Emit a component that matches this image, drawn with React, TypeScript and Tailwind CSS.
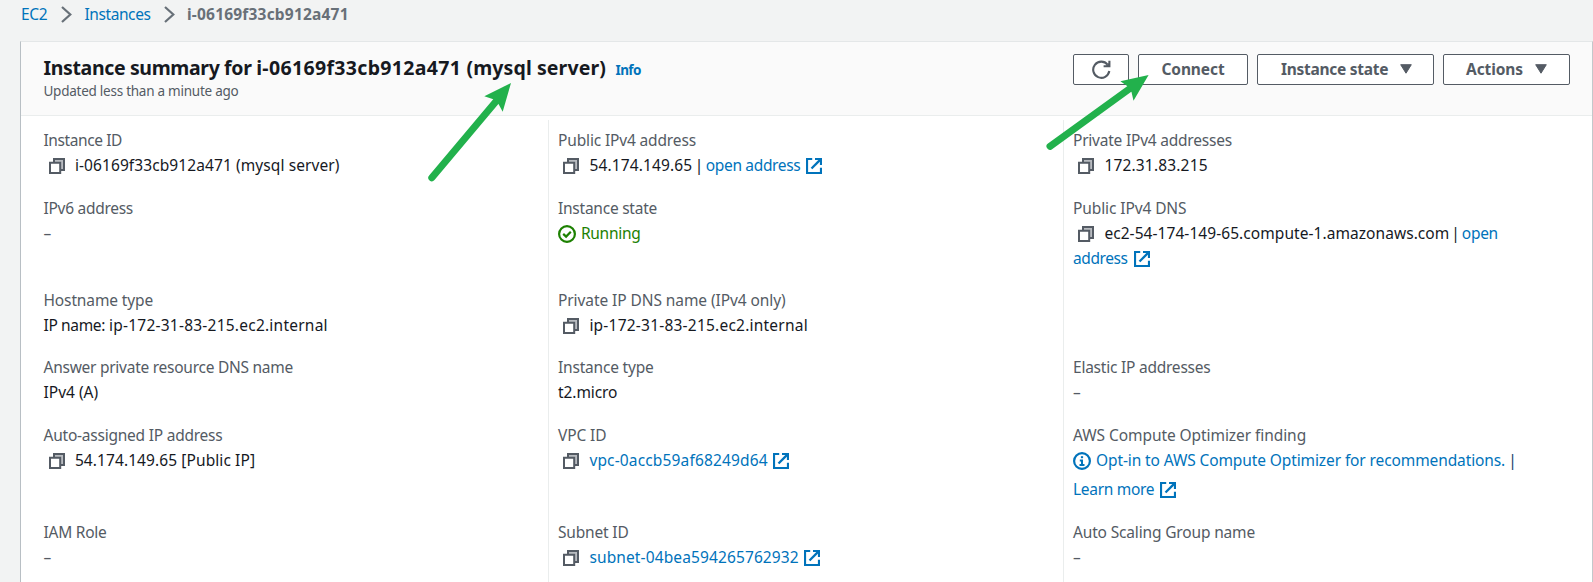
import type { ReactNode } from "react";

function CopyIcon() {
  return (
    <svg className="ml-[5.4px] mr-[10px] h-4 w-4 shrink-0" viewBox="0 0 16 16" fill="none" stroke="#545b64" strokeWidth="2">
      <path d="M5 1H15V11H5Z" fill="#b9bcc1" stroke="none" />
      <path d="M5 4V1H15V12H12" />
      <path d="M1 4.8H11.2V15H1Z" fill="#fff" />
    </svg>
  );
}

function ExternalIcon({ className = "ml-[5.5px]" }: { className?: string }) {
  return (
    <svg className={`h-4 w-4 shrink-0 ${className}`} viewBox="0 0 16 16" fill="none" stroke="#0073bb" strokeWidth="2.1">
      <path d="M6.2 1.05H1.05V14.95H14.95V9.8" />
      <path d="M9 1.05H14.95V7" />
      <path d="M14.6 1.4L5.5 10.5" strokeWidth="2.3" />
    </svg>
  );
}

function CheckIcon() {
  return (
    <svg className="mr-[5px] h-[18px] w-[18px] shrink-0" viewBox="0 0 18 18" fill="none" stroke="#1d8102" strokeWidth="2.2">
      <circle cx="9" cy="9" r="7.9" />
      <path d="M5.2 8.9L8.1 11.6L12.8 6.8" />
    </svg>
  );
}

function InfoIcon() {
  return (
    <svg className="mr-[5px] h-[18px] w-[18px] shrink-0" viewBox="0 0 18 18" fill="none" stroke="#0073bb" strokeWidth="2.2">
      <circle cx="9" cy="9" r="7.9" />
      <path d="M9 4.2V6.2" />
      <path d="M6.8 8.4H9V12.6M6.5 12.9H11.5" strokeWidth="2" />
    </svg>
  );
}

function Chevron() {
  return (
    <svg className="h-[17px] w-[11px] shrink-0" viewBox="0 0 11 17" fill="none" stroke="#687078" strokeWidth="2.2">
      <path d="M1 1L9.3 8.5L1 16" />
    </svg>
  );
}

function Caret() {
  return (
    <svg className="h-[10px] w-3 shrink-0" viewBox="0 0 12 10" fill="#545b64" stroke="#545b64" strokeWidth="1" strokeLinejoin="round">
      <path d="M0.7 0.7H11.3L6 9.2Z" />
    </svg>
  );
}

const BUTTON = "flex h-[31px] items-center justify-center rounded-[2px] border border-[#545b64] bg-white pb-px font-bold text-[#545b64]";

function Field({ label, tracking, children }: { label: string; tracking: string; children: ReactNode }) {
  return (
    <div className="pl-[9px] whitespace-nowrap">
      <div className={`h-[25px] text-[#545b64] ${tracking}`}>{label}</div>
      {children}
    </div>
  );
}

function Line({ children, className = "" }: { children: ReactNode; className?: string }) {
  return <div className={`flex h-[25px] items-center ${className}`}>{children}</div>;
}

function Dash() {
  return <Line className="text-[#545b64]">–</Line>;
}

const ROWS = "grid grid-rows-[68px_92px_67px_68px_97px_62px] pt-2";

export default function App() {
  return (
    <div className="flex h-[582px] flex-col overflow-hidden bg-[#f2f3f3] font-['Noto_Sans',sans-serif] text-[15.5px] leading-[25px] text-[#16191f]">
      <nav className="flex h-[41px] shrink-0 items-start pl-[21px]">
        <div className="flex h-[29px] items-center whitespace-nowrap text-[#0073bb]">
          <span className="w-[40px] tracking-[-0.27px]">EC2</span>
          <Chevron />
          <span className="ml-[12.5px] w-[79.5px] tracking-[-0.42px]">Instances</span>
          <Chevron />
          <span className="ml-[12px] font-bold tracking-[0.2px] text-[#687078]">i-06169f33cb912a471</span>
        </div>
      </nav>

      <main className="ml-5 flex grow flex-col border-t border-r border-l border-t-[#e4e7e8] border-r-[#c3c8cb] border-l-[#b8bfc4] bg-white">
        <header className="flex h-[74px] shrink-0 justify-between border-b border-[#eaeded] bg-[#fafafa] pr-[22px] pl-[22.5px]">
          <div className="pt-[13px] whitespace-nowrap">
            <div className="flex h-[25px] items-baseline">
              <h1 className="w-[572px] text-[19.5px] leading-[25px] font-bold">
                <span className="tracking-[-0.36px]">Instance summary for </span>
                <span className="tracking-[0.34px]">i-06169f33cb912a471</span>
                <span className="tracking-[0.1px]"> (mysql server)</span>
              </h1>
              <span className="text-[13.5px] font-bold tracking-[-0.6px] text-[#0073bb]">Info</span>
            </div>
            <div className="pt-px text-[13.5px] leading-[20px] tracking-[-0.25px] text-[#545b64]">Updated less than a minute ago</div>
          </div>
          <div className="flex gap-[9px] pt-3 whitespace-nowrap">
            <button className={`${BUTTON} w-[56px]`}>
              <svg className="h-[19px] w-[19px]" viewBox="0 0 19 19" fill="none" stroke="#545b64" strokeWidth="2.1">
                <path d="M17.3 11A8.1 8.1 0 1 1 15.6 4.6" />
                <path d="M17.4 0.8V6.3H11.6" />
                <path d="M17.4 2.5V6.3H13.4Z" fill="#545b64" stroke="none" />
              </svg>
            </button>
            <button className={`${BUTTON} w-[110px] tracking-[-0.1px]`}>Connect</button>
            <button className={`${BUTTON} w-[177px] gap-3 pl-[2px] tracking-[-0.27px]`}>
              Instance state <Caret />
            </button>
            <button className={`${BUTTON} w-[127px] gap-3 tracking-[-0.1px]`}>
              Actions <Caret />
            </button>
          </div>
        </header>

        <div className="grid grow grid-cols-[513.5px_515px_1fr] pt-1 pl-[13.5px]">
          <section className={ROWS}>
            <Field label="Instance ID" tracking="tracking-[-0.4px]">
              <Line><CopyIcon /><span className="tracking-[0.09px]">i-06169f33cb912a471 (mysql server)</span></Line>
            </Field>
            <Field label="IPv6 address" tracking="tracking-[-0.28px]"><Dash /></Field>
            <Field label="Hostname type" tracking="tracking-[-0.13px]">
              <Line>
                <span className="tracking-[-0.35px]">IP name:</span>
                <span className="ml-[4px] tracking-[0.23px]">ip-172-31-83-215.ec2.internal</span>
              </Line>
            </Field>
            <Field label="Answer private resource DNS name" tracking="tracking-[-0.26px]">
              <Line>IPv4 (A)</Line>
            </Field>
            <Field label="Auto-assigned IP address" tracking="tracking-[-0.23px]">
              <Line><CopyIcon /><span className="tracking-[0.09px]">54.174.149.65 [Public IP]</span></Line>
            </Field>
            <Field label="IAM Role" tracking="tracking-[-0.25px]"><Dash /></Field>
          </section>

          <section className={`${ROWS} border-l border-[#eaeded]`}>
            <Field label="Public IPv4 address" tracking="tracking-[-0.15px]">
              <Line>
                <CopyIcon />
                <span className="tracking-[0.14px]">54.174.149.65</span>
                <span className="w-[13.5px] text-center">|</span>
                <span className="tracking-[-0.35px] text-[#0073bb]">open address</span>
                <ExternalIcon />
              </Line>
            </Field>
            <Field label="Instance state" tracking="tracking-[-0.24px]">
              <Line className="tracking-[-0.3px] text-[#1d8102]"><CheckIcon />Running</Line>
            </Field>
            <Field label="Private IP DNS name (IPv4 only)" tracking="tracking-[-0.08px]">
              <Line><CopyIcon /><span className="tracking-[0.22px]">ip-172-31-83-215.ec2.internal</span></Line>
            </Field>
            <Field label="Instance type" tracking="tracking-[-0.2px]">
              <Line className="tracking-[-0.08px]">t2.micro</Line>
            </Field>
            <Field label="VPC ID" tracking="tracking-[-0.1px]">
              <Line className="text-[#0073bb]">
                <CopyIcon /><span className="tracking-[0.15px]">vpc-0accb59af68249d64</span><ExternalIcon />
              </Line>
            </Field>
            <Field label="Subnet ID" tracking="tracking-[-0.18px]">
              <Line className="text-[#0073bb]">
                <CopyIcon /><span className="tracking-[0.12px]">subnet-04bea594265762932</span><ExternalIcon />
              </Line>
            </Field>
          </section>

          <section className={`${ROWS} border-l border-[#eaeded]`}>
            <Field label="Private IPv4 addresses" tracking="tracking-[-0.22px]">
              <Line><CopyIcon /><span className="tracking-[0.17px]">172.31.83.215</span></Line>
            </Field>
            <Field label="Public IPv4 DNS" tracking="tracking-[-0.1px]">
              <Line>
                <CopyIcon />
                <span className="tracking-[0.06px]">ec2-54-174-149-65.compute-1.amazonaws.com</span>
                <span className="w-[12.5px] text-center">|</span>
                <span className="tracking-[-0.3px] text-[#0073bb]">open</span>
              </Line>
              <Line className="tracking-[-0.4px] text-[#0073bb]">address<ExternalIcon className="ml-[6px]" /></Line>
            </Field>
            <div />
            <Field label="Elastic IP addresses" tracking="tracking-[-0.23px]"><Dash /></Field>
            <Field label="AWS Compute Optimizer finding" tracking="tracking-[-0.07px]">
              <Line className="text-[#0073bb]">
                <InfoIcon />
                <span className="tracking-[-0.11px]">Opt-in to AWS Compute Optimizer for recommendations.</span>
                <span className="ml-[3px] text-[#16416b]">|</span>
              </Line>
              <Line className="mt-1 tracking-[-0.3px] text-[#0073bb]">Learn more<ExternalIcon /></Line>
            </Field>
            <Field label="Auto Scaling Group name" tracking="tracking-[-0.16px]"><Dash /></Field>
          </section>
        </div>
      </main>

      <svg className="pointer-events-none absolute top-0 left-0 h-[582px] w-[1593px]" viewBox="0 0 1593 582" fill="#22b14c" stroke="#22b14c">
        <path d="M431.8 177.8L498 99" strokeWidth="7" strokeLinecap="round" />
        <path d="M511 83L484.3 96.3L493.3 99.3L498.5 104L502.7 111.7Z" stroke="none" />
        <path d="M1050 146.3L1132 87" strokeWidth="7" strokeLinecap="round" />
        <path d="M1148.6 75L1120.4 81.3L1127.5 86.3L1131.5 92L1133.5 100.7Z" stroke="none" />
      </svg>
    </div>
  );
}
